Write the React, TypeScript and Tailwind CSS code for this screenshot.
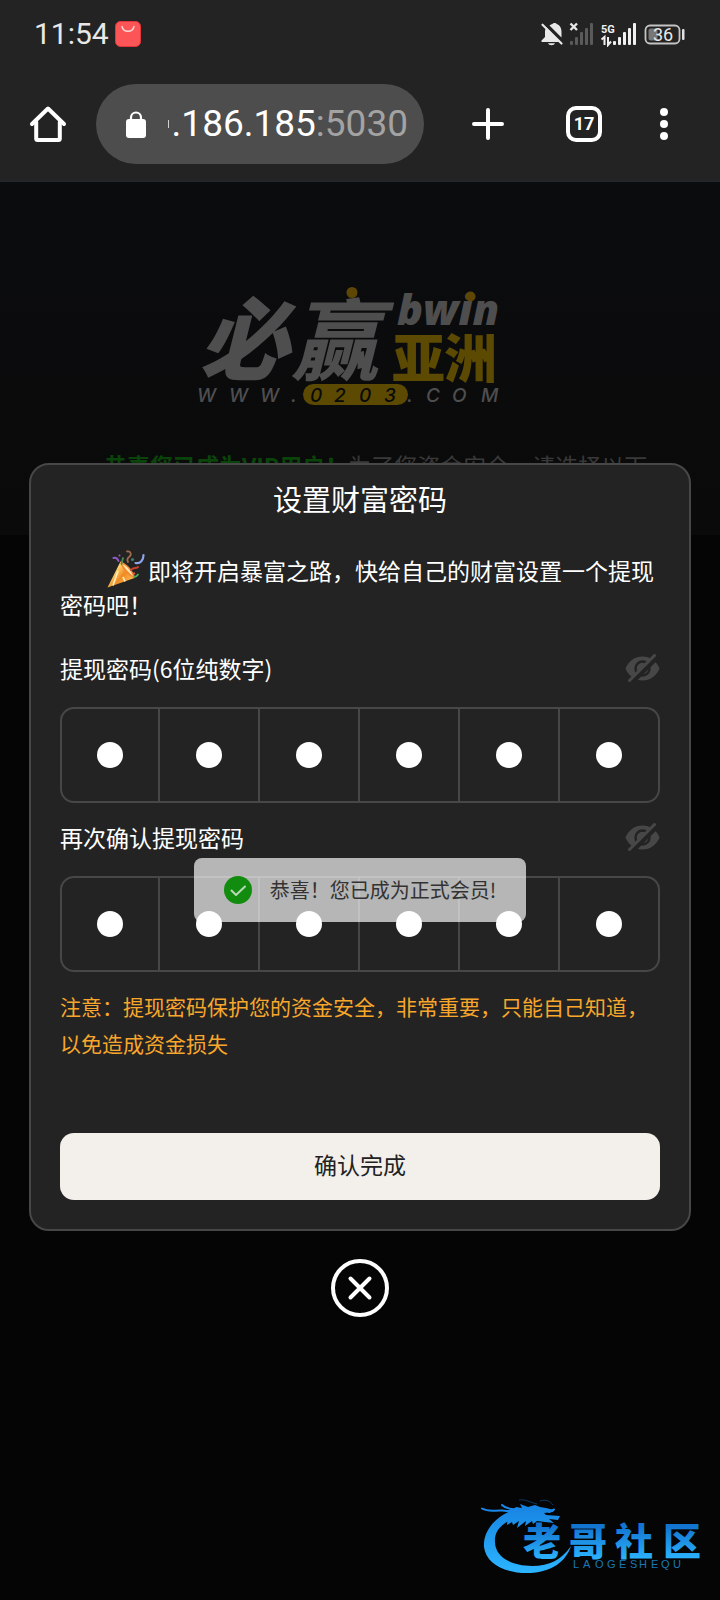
import { useState } from 'react';
import type { FormEvent } from 'react';

const PIN_LENGTH = 6;

function StatusBar() {
  return (
    <div className="flex h-[68px] items-center justify-between pl-[34px] pr-[34px]">
      <div className="flex items-center gap-1.5">
        <span className="font-[Roboto,sans-serif] text-[30px] leading-9 text-[#e8e8e8]">11:54</span>
        <svg width="26" height="26" viewBox="0 0 26 26" aria-hidden="true">
          <rect x="0.5" y="0.5" width="25" height="25" rx="5" fill="#fb5558" stroke="#e2383c" />
          <path d="M7 5.500c.6 3 3 4.800 6 4.800s5.400-1.800 6-4.800" fill="none" stroke="#ffd9d4" strokeWidth="1.400" strokeLinecap="round" />
        </svg>
      </div>
      <svg width="146" height="26" viewBox="540 21 146 26" aria-hidden="true">
        {/* muted bell */}
        <path
          d="M549.500 25.500c1-.9 2-1.300 3-1.500.8-1.400 3.400-1.400 4.200 0 3 1 4.800 3.800 4.800 7.500v6z"
          fill="#e8e8e8"
        />
        <path d="M546.500 27.500l14 14.500h-19v-1.500l3.500-3.500v-5.500c0-1.500.5-3 1.500-4z" fill="#e8e8e8" />
        <path d="M548 43.200h7c-.7 2.600-6.300 2.600-7 0z" fill="#e8e8e8" />
        <path d="M544.500 23.500l18 18.500" stroke="#232323" strokeWidth="1.500" />
        <path d="M542.500 24.700l19 18.800" stroke="#e8e8e8" strokeWidth="2.200" strokeLinecap="round" />
        {/* empty sim */}
        <path d="M570.500 23.500l6.500 6.500M577 23.500l-6.500 6.500" stroke="#e8e8e8" strokeWidth="2.400" />
        <g fill="#5a5a5a">
          <rect x="570" y="41" width="3" height="4" rx="1" />
          <rect x="575" y="37" width="3" height="8" rx="1" />
          <rect x="580" y="32" width="3" height="13" rx="1" />
          <rect x="585" y="28" width="3" height="17" rx="1" />
          <rect x="590" y="23" width="3" height="22" rx="1" />
        </g>
        {/* active sim */}
        <text x="601" y="33" fontSize="11" fontWeight="700" fontFamily="Roboto, sans-serif" fill="#f0f0f0">
          5G
        </text>
        <path d="M601.500 39.500l3-2.500v8M608 37v8l3-3.500" fill="none" stroke="#f0f0f0" strokeWidth="2" />
        <g fill="#f0f0f0">
          <rect x="613" y="41" width="3" height="4" rx="1" />
          <rect x="618" y="37" width="3" height="8" rx="1" />
          <rect x="623" y="32" width="3" height="13" rx="1" />
          <rect x="628" y="28" width="3" height="17" rx="1" />
          <rect x="633" y="23" width="3" height="22" rx="1" />
        </g>
        {/* battery */}
        <rect x="645.500" y="25.500" width="34" height="18" rx="4.500" fill="none" stroke="#c4c4c4" strokeWidth="1.800" />
        <rect x="648.500" y="28.500" width="9" height="12" rx="2" fill="#777" />
        <rect x="682" y="29" width="2.500" height="11" rx="1" fill="#e0e0e0" />
        <text x="663" y="41" textAnchor="middle" fontSize="18" fontFamily="Roboto, sans-serif" fill="#e8e8e8">
          36
        </text>
      </svg>
    </div>
  );
}

function BrowserBar() {
  return (
    <div className="flex h-28 items-center pr-6">
      <button type="button" aria-label="主页" className="flex w-24 shrink-0 items-center justify-center">
        <svg width="40" height="40" viewBox="0 0 40 40" fill="none" stroke="#fff" strokeWidth="4" strokeLinecap="round" strokeLinejoin="round" aria-hidden="true">
          <path d="M4 20L20 4.500 36 20" />
          <path d="M8.200 18v16.500c0 .9.700 1.500 1.500 1.500h20.600c.8 0 1.500-.6 1.500-1.500V18" />
        </svg>
      </button>
      <button type="button" className="mr-4 flex h-20 min-w-0 flex-1 items-center rounded-full bg-[#4d4d4d] pl-[30px] pr-4">
        <svg className="shrink-0" width="20" height="27" viewBox="0 0 20 27" aria-hidden="true">
          <rect y="8" width="20" height="19" rx="3" fill="#fff" />
          <path d="M5 10V6.500a5 5 0 0 1 10 0V10" fill="none" stroke="#fff" strokeWidth="2.200" />
        </svg>
        <span className="ml-[22px] h-2 w-px shrink-0 bg-[#d0d0d0]" />
        <span className="flex min-w-0 flex-1 justify-end overflow-hidden whitespace-nowrap font-[Roboto,sans-serif] text-[37px] leading-[46px] text-white">
          .186.185<span className="text-[#a3a3a3]">:5030</span>
        </span>
      </button>
      <button type="button" aria-label="新标签页" className="flex w-24 shrink-0 items-center justify-center">
        <svg width="32" height="32" viewBox="0 0 32 32" stroke="#fff" strokeWidth="4" strokeLinecap="round" aria-hidden="true">
          <path d="M16 2v28M2 16h28" />
        </svg>
      </button>
      <button type="button" aria-label="17 个标签页" className="flex w-24 shrink-0 items-center justify-center">
        <span className="flex size-9 items-center justify-center rounded-[10px] border-4 border-white font-[Roboto,sans-serif] text-lg leading-none font-bold text-white">
          17
        </span>
      </button>
      <button type="button" aria-label="更多" className="flex w-16 shrink-0 items-center justify-center">
        <svg width="8" height="32" viewBox="0 0 8 32" fill="#fff" aria-hidden="true">
          <circle cx="4" cy="4" r="4" />
          <circle cx="4" cy="16" r="4" />
          <circle cx="4" cy="28" r="4" />
        </svg>
      </button>
    </div>
  );
}

function SiteLogo() {
  return (
    <svg className="overflow-visible" width="310" height="122" viewBox="196 284 310 122" aria-label="必赢亚洲 bwin">
      <g fontFamily="'Noto Sans CJK SC', sans-serif" fontWeight="900">
        <g fontStyle="italic" fill="#4e4e4f">
          <text x="199" y="373" fontSize="90">必</text>
          <text x="291" y="373" fontSize="88">赢</text>
        </g>
        <text x="392 444" y="378" fontSize="53" fill="#5c4a02">
          亚洲
        </text>
      </g>
      <circle cx="352" cy="292.500" r="5.500" fill="#5e4606" />
      <text x="397" y="325" fontSize="43" fontWeight="800" fontStyle="italic" fontFamily="'Open Sans', sans-serif" fill="#4e4e4f">
        bwin
      </text>
      <circle cx="470.500" cy="296.500" r="5" fill="#5e4606" />
      <rect x="303" y="384" width="105" height="21" rx="10.500" fill="#5c4a02" />
      <g fontSize="19" fontStyle="italic" fontWeight="500" fontFamily="Inter, sans-serif" fill="#4e4e4f">
        <text x="197 229 260 291" y="402">WWW.</text>
        <text x="310 334 359 384" y="402" fill="#0a0a0a">0203</text>
        <text x="407 426 452 481" y="402">.COM</text>
      </g>
    </svg>
  );
}

function PartyPopper() {
  return (
    <svg className="-my-2 mr-0.5 inline-block align-baseline" width="40" height="38" viewBox="0 0 40 38" aria-label="🎉">
      <defs>
        <linearGradient id="cone" x1="0" y1="0" x2="1" y2="0.800">
          <stop offset="0" stopColor="#f28a1c" />
          <stop offset="0.350" stopColor="#ffd36b" />
          <stop offset="0.600" stopColor="#f08a24" />
          <stop offset="1" stopColor="#ffc75a" />
        </linearGradient>
      </defs>
      <path d="M14.500 11.500C20 14 26 20.500 28.500 28L1.500 37.500z" fill="url(#cone)" />
      <path d="M14.500 11.500c-1 4 7 15 14 16.500 1-4-7-15-14-16.500z" fill="#f08b35" />
      <path d="M16 14c3 4 7 9 11 12-2-5-6-10-11-12z" fill="#ffe9b0" />
      <path d="M12 21l-5 14.500M17 27l2 4.500" stroke="#fff0bf" strokeWidth="1.600" />
      <path d="M7.500 8c2-1 4 .5 5 3" fill="none" stroke="#8c5bc7" strokeWidth="2" strokeLinecap="round" />
      <path d="M37.500 5c0 5-3 9-8 8" fill="none" stroke="#8fa3ea" strokeWidth="2.200" strokeLinecap="round" />
      <path d="M21 1.500c4-.5 5 3.500 2 5.500-2 1.400-2 3-1 5" fill="none" stroke="#a06a4c" strokeWidth="1.800" strokeLinecap="round" />
      <path d="M17 8l-1.500 6" stroke="#4f8a52" strokeWidth="1.800" strokeLinecap="round" />
      <path d="M25 20c2-3 6-1 7-3" fill="none" stroke="#c9402f" strokeWidth="2" strokeLinecap="round" />
      <path d="M28 27c2 0 3-1 4-2.500" fill="none" stroke="#4fae5a" strokeWidth="1.800" strokeLinecap="round" />
      <circle cx="26.500" cy="9.500" r="1.600" fill="#3f7f6d" />
      <circle cx="13.500" cy="5.500" r="1" fill="#a85bb5" />
      <circle cx="28" cy="23.500" r="1.200" fill="#e0564a" />
    </svg>
  );
}

function EyeOffIcon() {
  return (
    <svg width="35" height="28" viewBox="0 0 35 28" aria-hidden="true">
      <path d="M.5 14.500C3.500 7 10 2.500 17.500 2.500S31.500 7 34.500 14.500C31.500 22 25 26.500 17.500 26.500S3.500 22 .5 14.500z" fill="#474747" />
      <circle cx="17.500" cy="14.500" r="7" fill="none" stroke="#232323" strokeWidth="2.400" />
      <path d="M6.500 28L33 1.500" stroke="#232323" strokeWidth="6" />
      <path d="M4.500 26.500L29.500 1.500" stroke="#474747" strokeWidth="3" strokeLinecap="round" />
    </svg>
  );
}

type PinFieldProps = {
  id: string;
  label: string;
  value: string;
  onChange: (value: string) => void;
  className?: string;
};

function PinField({ id, label, value, onChange, className }: PinFieldProps) {
  return (
    <div className={className}>
      <div className="flex h-[34px] items-center justify-between">
        <label htmlFor={id} className="text-[23px] leading-[34px]">
          {label}
        </label>
        <button type="button" aria-label="显示密码">
          <EyeOffIcon />
        </button>
      </div>
      <div className="relative mt-[22px] grid h-24 grid-cols-6">
        {Array.from({ length: PIN_LENGTH }, (_, i) => (
          <div
            key={i}
            className="flex items-center justify-center border-y-2 border-r-2 border-[#474747] first-of-type:rounded-l-[14px] first-of-type:border-l-2 last-of-type:rounded-r-[14px]"
          >
            {i < value.length && <span className="relative z-20 size-[26px] rounded-full bg-white" />}
          </div>
        ))}
        <input
          id={id}
          type="password"
          inputMode="numeric"
          maxLength={PIN_LENGTH}
          value={value}
          onChange={(e) => onChange(e.target.value.replace(/\D/g, ''))}
          className="absolute inset-0 h-full w-full opacity-0"
        />
      </div>
    </div>
  );
}

function PasswordDialog() {
  const [pin, setPin] = useState('000000');
  const [confirmPin, setConfirmPin] = useState('000000');

  function handleSubmit(e: FormEvent) {
    e.preventDefault();
  }

  return (
    <div role="dialog" aria-modal="true" aria-labelledby="pin-title" className="absolute inset-0 flex flex-col items-center justify-center px-[29px] pb-0.5">
      <form onSubmit={handleSubmit} className="w-full rounded-[20px] border-2 border-[#474747] bg-[#232323] px-[29px] pb-[29px] text-white">
        <h2 id="pin-title" className="text-center text-[29px] leading-[66px]">
          设置财富密码
        </h2>
        <p className="mt-[22px] indent-[46px] text-[23px] leading-[34px]">
          <PartyPopper />
          即将开启暴富之路，快给自己的财富设置一个提现密码吧！
        </p>
        <PinField id="pin" label="提现密码(6位纯数字)" value={pin} onChange={setPin} className="mt-[30px]" />
        <PinField id="pin-confirm" label="再次确认提现密码" value={confirmPin} onChange={setConfirmPin} className="mt-[17px]" />
        <p className="mt-4 text-[21px] leading-[37px] text-[#f8a72c]">
          注意：提现密码保护您的资金安全，非常重要，只能自己知道，以免造成资金损失
        </p>
        <button type="submit" className="mt-[71px] h-[67px] w-full rounded-[14px] bg-[#f3f0eb] pb-1 text-[23px] text-[#222]">
          确认完成
        </button>
      </form>
      <button type="button" aria-label="关闭" className="mt-7">
        <svg width="58" height="58" viewBox="0 0 58 58" fill="none" stroke="#fff" strokeWidth="4" strokeLinecap="round" aria-hidden="true">
          <circle cx="29" cy="29" r="27" />
          <path d="M19.500 19.500l19 19M38.500 19.500l-19 19" />
        </svg>
      </button>
    </div>
  );
}

function Toast() {
  return (
    <div className="pointer-events-none absolute inset-0 z-10 flex items-center justify-center pb-0.5">
      <div role="status" className="flex h-16 items-center gap-[18px] rounded-lg bg-white/67 px-[30px] text-xl text-[#333]">
        <svg width="28" height="28" viewBox="0 0 28 28" aria-hidden="true">
          <circle cx="14" cy="14" r="14" fill="#128c0e" />
          <path d="M7.500 14.500l4.500 4.500 9-8.500" fill="none" stroke="#b9d8b8" strokeWidth="2" strokeLinecap="round" strokeLinejoin="round" />
        </svg>
        恭喜！您已成为正式会员!
      </div>
    </div>
  );
}

function Watermark() {
  return (
    <svg className="absolute right-4 bottom-6" width="226" height="82" viewBox="478 1494 226 82" aria-hidden="true">
      <defs>
        <linearGradient id="wm" gradientUnits="userSpaceOnUse" x1="0" y1="1500" x2="0" y2="1572">
          <stop offset="0" stopColor="#1580e0" />
          <stop offset="1" stopColor="#2cb4ff" />
        </linearGradient>
        <linearGradient id="wmText" gradientUnits="userSpaceOnUse" x1="0" y1="1526" x2="0" y2="1558">
          <stop offset="0" stopColor="#1274d0" />
          <stop offset="1" stopColor="#2bb0fa" />
        </linearGradient>
      </defs>
      {/* dragon body */}
      <path
        d="M513 1510C494 1517 483 1532 484 1547c2 17 22 27 46 26 21-1 36-11 41-27-10 14-21 20-39 20-22 0-37-10-37-24-1-12 8-20 23-25z"
        fill="url(#wm)"
      />
      {/* head, mane and whiskers */}
      <path
        d="M508 1513l8-6 6 1-2-4 8 3 7-2 5 2 6 1 8 2-1 2-9 1 2 2 14 1-2 4-9-1 5 4-9-1-8-1-4 3-1-3-7 5 1-5-9 7 2-7-6 4-1-3-5 3z"
        fill="url(#wm)"
      />
      <path d="M482 1508.500c7 4 13 1.500 20 2 4 .3 8 1.500 13-.5M502 1505c4 4 10 4.500 16 4M549 1512l5-2.500" fill="none" stroke="#1a88e8" strokeWidth="2" strokeLinecap="round" />
      <path d="M519 1500c6-1 10 2 18 4M540 1501c6-2 10 0 13 4" fill="none" stroke="#0b3a63" strokeWidth="1" />
      <text x="523 569 615 663" y="1555" fontSize="38" fontWeight="900" fontFamily="'Noto Sans CJK SC', sans-serif" fill="url(#wmText)">
        老哥社区
      </text>
      <text x="573 583 595 607 619 630 639 651 661 673" y="1568" fontSize="11" fontFamily="'Liberation Sans', sans-serif" fill="#1b78b8">
        LAOGESHEQU
      </text>
    </svg>
  );
}

export default function App() {
  return (
    <div className="flex min-h-screen flex-col bg-[#050505] font-['Noto_Sans_CJK_SC',sans-serif]">
      <header className="border-b-2 border-[#24282b] bg-[#232323]">
        <StatusBar />
        <BrowserBar />
      </header>
      <main className="relative flex-1">
        <section className="flex h-[353px] flex-col items-center overflow-hidden bg-linear-to-b from-[#0b0c0e] to-[#0a0a0a] pt-[102px]">
          <div className="-ml-[18px]">
            <SiteLogo />
          </div>
          <p className="mt-[42px] w-full px-[58px] indent-[46px] text-[23px] leading-[34px] text-[#393939]">
            <strong className="font-bold text-[#0a440a]">恭喜您已成为VIP用户！</strong>
            为了您资金安全，请选择以下
          </p>
        </section>
        <PasswordDialog />
        <Toast />
        <Watermark />
      </main>
    </div>
  );
}
